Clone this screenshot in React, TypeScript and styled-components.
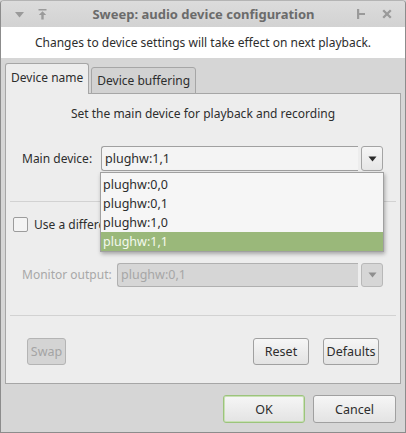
import React from "react";
import styled, { createGlobalStyle } from "styled-components";

const GlobalStyle = createGlobalStyle`
  html, body { margin: 0; padding: 0; background: #d6d6d6; }
  * { box-sizing: border-box; }
  body { font-family: "Noto Sans", "DejaVu Sans", sans-serif; font-size: 12px; color: #2d2d2d; }
`;

const Window = styled.div`
  width: 406px;
  height: 433px;
  border: 1px solid #8c8c8c;
  border-top-color: #b4b4b4;
  border-radius: 4px 4px 0 0;
  background: #d6d6d6;
  display: flex;
  flex-direction: column;
  overflow: hidden;
`;

const TitleBar = styled.div`
  height: 26px;
  flex: none;
  display: flex;
  align-items: center;
  padding: 0 13px 0 14px;
  background: linear-gradient(#dcdcdc, #d2d2d2);
  color: #6e6e6e;
`;

const TitleButtons = styled.div<{ $end?: boolean }>`
  display: flex;
  align-items: center;
  gap: ${(p) => (p.$end ? "17px" : "14px")};
  width: 60px;
  justify-content: ${(p) => (p.$end ? "flex-end" : "flex-start")};
`;

const Title = styled.div`
  flex: 1;
  text-align: center;
  font-weight: bold;
  font-size: 13px;
  color: #6b6b6b;
`;

const InfoBar = styled.div`
  height: 31px;
  flex: none;
  background: #ffffff;
  display: flex;
  align-items: center;
  justify-content: center;
  padding-bottom: 1px;
`;

const Body = styled.div`
  flex: 1;
  display: flex;
  flex-direction: column;
  padding: 6px 4px 0 4px;
`;

const TabRow = styled.div`
  display: flex;
  align-items: flex-end;
  gap: 2px;
  height: 30px;
  position: relative;
  z-index: 1;
  margin-bottom: -1px;
`;

const Tab = styled.div<{ $active?: boolean }>`
  height: ${(p) => (p.$active ? "31px" : "27px")};
  padding: 0 5px;
  display: flex;
  align-items: center;
  padding-bottom: ${(p) => (p.$active ? "4px" : "0")};
  border: 1px solid #a6a6a6;
  border-bottom: ${(p) => (p.$active ? "none" : "1px solid #a6a6a6")};
  border-radius: 3px 3px 0 0;
  background: ${(p) => (p.$active ? "#ededed" : "#d2d2d2")};
  font-size: 12px;
`;

const Panel = styled.div`
  height: 291px;
  background: #ededed;
  border: 1px solid #a6a6a6;
  display: flex;
  flex-direction: column;
  padding: 0 4px;
  position: relative;
`;

const Heading = styled.div`
  text-align: center;
  padding: 11px 0 0 0;
  height: 52px;
`;

const Row = styled.div`
  display: flex;
  align-items: center;
  height: 25px;
  padding-left: 12px;
`;

const Label = styled.div<{ $disabled?: boolean; $w: number }>`
  width: ${(p) => p.$w}px;
  color: ${(p) => (p.$disabled ? "#a8a8a8" : "#2d2d2d")};
`;

const Entry = styled.div<{ $disabled?: boolean }>`
  flex: 1;
  height: ${(p) => (p.$disabled ? "24px" : "25px")};
  border: 1px solid ${(p) => (p.$disabled ? "#b0b0b0" : "#a0a0a0")};
  border-radius: 3px 0 0 3px;
  border-right: none;
  background: ${(p) => (p.$disabled ? "#d6d6d6" : "#f4f4f4")};
  color: ${(p) => (p.$disabled ? "#a6a6a6" : "#2d2d2d")};
  display: flex;
  align-items: center;
  padding-left: 3px;
  font-size: 12.5px;
`;

const ArrowButton = styled.div<{ $disabled?: boolean }>`
  width: 22px;
  height: ${(p) => (p.$disabled ? "24px" : "25px")};
  margin-left: 3px;
  margin-right: 13px;
  border: 1px solid ${(p) => (p.$disabled ? "#b8b8b8" : "#a4a4a4")};
  border-radius: 3px;
  background: ${(p) => (p.$disabled ? "#d6d6d6" : "linear-gradient(#f6f6f6, #e6e6e6)")};
  display: flex;
  align-items: center;
  justify-content: center;
`;

const Separator = styled.div`
  height: 1px;
  background: #d2d2d2;
  margin: 0;
`;

const Gap = styled.div<{ $h: number }>`
  height: ${(p) => p.$h}px;
  flex: none;
`;

const CheckRow = styled.div`
  display: flex;
  align-items: center;
  gap: 6px;
  padding-left: 3px;
  height: 15px;
`;

const CheckBox = styled.div`
  width: 15px;
  height: 15px;
  border: 1px solid #9c9c9c;
  border-radius: 2px;
  background: #f4f4f4;
`;

const ButtonRow = styled.div`
  display: flex;
  align-items: center;
  padding: 0 17px 0 17px;
  gap: 14px;
`;

const Spacer = styled.div`
  flex: 1;
`;

const Button = styled.div<{ $disabled?: boolean; $w: number; $h?: number; $default?: boolean }>`
  width: ${(p) => p.$w}px;
  height: ${(p) => p.$h ?? 27}px;
  border: 1px solid ${(p) => (p.$default ? "#9cc47c" : p.$disabled ? "#b4b4b4" : "#a0a0a0")};
  box-shadow: ${(p) => (p.$default ? "inset 0 0 0 1px #c8e0b4" : "none")};
  border-radius: 3px;
  background: ${(p) => (p.$disabled ? "#d4d4d4" : "linear-gradient(#f6f6f6, #e3e3e3)")};
  color: ${(p) => (p.$disabled ? "#a4a4a4" : "#2d2d2d")};
  display: flex;
  align-items: center;
  justify-content: center;
  font-size: 12.5px;
`;

const ActionArea = styled.div`
  display: flex;
  justify-content: flex-end;
  gap: 8px;
  padding: 11px 5px 0 0;
`;

const Popup = styled.div`
  position: absolute;
  left: 94px;
  top: 78px;
  width: 284px;
  height: 80px;
  background: #f6f6f6;
  border: 1px solid #a0a0a0;
  box-shadow: 1px 2px 4px rgba(0, 0, 0, 0.3);
  display: flex;
  flex-direction: column;
  justify-content: flex-end;
  z-index: 5;
`;

const PopupItem = styled.div<{ $selected?: boolean }>`
  height: 19px;
  display: flex;
  align-items: center;
  padding-left: 2px;
  font-size: 12.5px;
  background: ${(p) => (p.$selected ? "#9ab87a" : "transparent")};
  color: ${(p) => (p.$selected ? "#f4f8ee" : "#2d2d2d")};
`;

const Down = ({ color }: { color: string }) => (
  <svg width="9" height="6" viewBox="0 0 9 6">
    <path d="M0.5 0.5 H8.5 L4.5 5.5 Z" fill={color} />
  </svg>
);

export default function App() {
  return (
    <>
      <GlobalStyle />
      <Window>
        <TitleBar>
          <TitleButtons>
            <svg width="9" height="7" viewBox="0 0 9 7">
              <path d="M0 1 H9 L4.5 6.5 Z" fill="#9a9a9a" />
            </svg>
            <svg width="9" height="11" viewBox="0 0 9 11">
              <path d="M0.5 0.8 H8.5" stroke="#9a9a9a" strokeWidth="1.6" />
              <path d="M4.5 2.3 L0.8 6 H3.3 V10.5 H5.7 V6 H8.2 Z" fill="#9a9a9a" />
            </svg>
          </TitleButtons>
          <Title>Sweep: audio device configuration</Title>
          <TitleButtons $end>
            <svg width="8" height="10" viewBox="0 0 8 10">
              <rect x="0" y="0" width="2.2" height="10" fill="#9a9a9a" />
              <rect x="2" y="4" width="6" height="2" fill="#9a9a9a" />
            </svg>
            <svg width="10" height="10" viewBox="0 0 10 10">
              <path d="M1.2 1.2 L8.8 8.8 M8.8 1.2 L1.2 8.8" stroke="#9a9a9a" strokeWidth="2.3" />
            </svg>
          </TitleButtons>
        </TitleBar>
        <InfoBar>Changes to device settings will take effect on next playback.</InfoBar>
        <Body>
          <TabRow>
            <Tab $active>Device name</Tab>
            <Tab>Device buffering</Tab>
          </TabRow>
          <Panel>
            <Heading>Set the main device for playback and recording</Heading>
            <Row>
              <Label $w={79}>Main device:</Label>
              <Entry>plughw:1,1</Entry>
              <ArrowButton>
                <Down color="#2a2a2a" />
              </ArrowButton>
            </Row>
            <Gap $h={30} />
            <Separator />
            <Gap $h={15} />
            <CheckRow>
              <CheckBox />
              <span>Use a different device for monitoring</span>
            </CheckRow>
            <Gap $h={30} />
            <Row>
              <Label $disabled $w={95}>Monitor output:</Label>
              <Entry $disabled>plughw:0,1</Entry>
              <ArrowButton $disabled>
                <Down color="#8e8e8e" />
              </ArrowButton>
            </Row>
            <Gap $h={28} />
            <Separator />
            <Gap $h={22} />
            <ButtonRow>
              <Button $disabled $w={39}>Swap</Button>
              <Spacer />
              <Button $w={56}>Reset</Button>
              <Button $w={56}>Defaults</Button>
            </ButtonRow>
            <Popup>
              <PopupItem>plughw:0,0</PopupItem>
              <PopupItem>plughw:0,1</PopupItem>
              <PopupItem>plughw:1,0</PopupItem>
              <PopupItem $selected>plughw:1,1</PopupItem>
            </Popup>
          </Panel>
          <ActionArea>
            <Button $default $w={82} $h={28}>OK</Button>
            <Button $w={83} $h={28}>Cancel</Button>
          </ActionArea>
        </Body>
      </Window>
    </>
  );
}
